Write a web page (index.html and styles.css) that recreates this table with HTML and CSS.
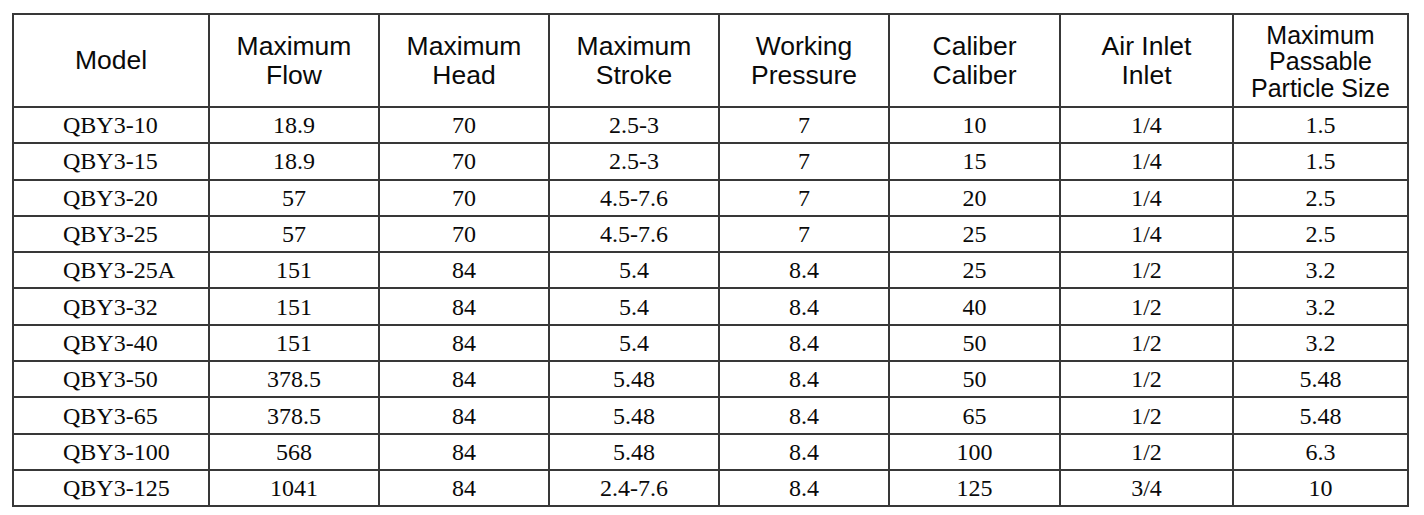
FILE: index.html
```html
<!DOCTYPE html>
<html>
<head>
<meta charset="utf-8">
<title>QBY3 Pump Specifications</title>
<link rel="stylesheet" href="styles.css">
</head>
<body>
<table class="spec">
  <colgroup>
    <col class="c-model">
    <col class="c-std">
    <col class="c-std">
    <col class="c-std">
    <col class="c-std">
    <col class="c-w1">
    <col class="c-w2">
    <col class="c-w3">
  </colgroup>
  <thead>
    <tr class="head-row">
      <th>Model</th>
      <th>Maximum<br>Flow</th>
      <th>Maximum<br>Head</th>
      <th>Maximum<br>Stroke</th>
      <th>Working<br>Pressure</th>
      <th>Caliber<br>Caliber</th>
      <th>Air Inlet<br>Inlet</th>
      <th class="th-tight">Maximum<br>Passable<br>Particle Size</th>
    </tr>
  </thead>
  <tbody>
    <tr><td class="model">QBY3-10</td><td>18.9</td><td>70</td><td>2.5-3</td><td>7</td><td>10</td><td>1/4</td><td>1.5</td></tr>
    <tr><td class="model">QBY3-15</td><td>18.9</td><td>70</td><td>2.5-3</td><td>7</td><td>15</td><td>1/4</td><td>1.5</td></tr>
    <tr><td class="model">QBY3-20</td><td>57</td><td>70</td><td>4.5-7.6</td><td>7</td><td>20</td><td>1/4</td><td>2.5</td></tr>
    <tr><td class="model">QBY3-25</td><td>57</td><td>70</td><td>4.5-7.6</td><td>7</td><td>25</td><td>1/4</td><td>2.5</td></tr>
    <tr><td class="model">QBY3-25A</td><td>151</td><td>84</td><td>5.4</td><td>8.4</td><td>25</td><td>1/2</td><td>3.2</td></tr>
    <tr><td class="model">QBY3-32</td><td>151</td><td>84</td><td>5.4</td><td>8.4</td><td>40</td><td>1/2</td><td>3.2</td></tr>
    <tr><td class="model">QBY3-40</td><td>151</td><td>84</td><td>5.4</td><td>8.4</td><td>50</td><td>1/2</td><td>3.2</td></tr>
    <tr><td class="model">QBY3-50</td><td>378.5</td><td>84</td><td>5.48</td><td>8.4</td><td>50</td><td>1/2</td><td>5.48</td></tr>
    <tr><td class="model">QBY3-65</td><td>378.5</td><td>84</td><td>5.48</td><td>8.4</td><td>65</td><td>1/2</td><td>5.48</td></tr>
    <tr><td class="model">QBY3-100</td><td>568</td><td>84</td><td>5.48</td><td>8.4</td><td>100</td><td>1/2</td><td>6.3</td></tr>
    <tr><td class="model">QBY3-125</td><td>1041</td><td>84</td><td>2.4-7.6</td><td>8.4</td><td>125</td><td>3/4</td><td>10</td></tr>
  </tbody>
</table>
</body>
</html>
```

FILE: styles.css
```css
html, body {
  background: #ffffff;
}
body {
  margin: 0;
  padding: 13px 0 0 12px;
}
.spec {
  border-collapse: collapse;
  table-layout: fixed;
  width: 1395px;
  color: #0a0a0a;
}
.c-model { width: 196px; }
.c-std { width: 170px; }
.c-w1 { width: 171px; }
.c-w2 { width: 173px; }
.c-w3 { width: 175px; }

.spec th,
.spec td {
  border: 2px solid #383838;
  padding: 0;
  text-align: center;
  vertical-align: middle;
}
.head-row {
  height: 93px;
}
.spec th {
  font-family: "Liberation Sans", Arial, sans-serif;
  font-weight: normal;
  font-size: 26.5px;
  line-height: 29px;
}
.spec th.th-tight {
  font-size: 25px;
  line-height: 26.5px;
  padding-top: 2px;
}
.spec tbody tr {
  height: 36.3px;
}
.spec td {
  font-family: "Liberation Serif", "Times New Roman", serif;
  font-size: 24px;
  line-height: 28px;
}
.spec td.model {
  text-align: left;
  padding-left: 49px;
}
```
